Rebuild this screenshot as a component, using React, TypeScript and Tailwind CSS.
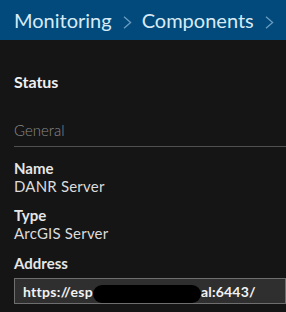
import React from 'react';

const font = { fontFamily: '"Lato", "Noto Sans", sans-serif' };

function Chevron() {
  return (
    <svg width="9" height="13" viewBox="0 0 9 13" className="ml-[11px] mr-[10px] mt-[4px] shrink-0">
      <path d="M1 0.8 L7.6 6.5 L1 12.2" fill="none" stroke="#6a9cc2" strokeWidth="1.3" />
    </svg>
  );
}

function Field({ label, value }: { label: string; value: string }) {
  return (
    <div className="flex flex-col">
      <div className="text-[15px] font-bold leading-[18px] text-[#e6e6e6]">{label}</div>
      <div className="text-[15px] tracking-[0.2px] leading-[19px] text-[#dcdcdc]">{value}</div>
    </div>
  );
}

export default function App() {
  return (
    <div className="h-[312px] w-[286px] overflow-hidden bg-[#151515]" style={font}>
      <div className="flex h-[40px] items-center whitespace-nowrap bg-[#014a7b] pl-[14px] text-[20px] text-[#d7eaf6]">
        <span>Monitoring</span>
        <Chevron />
        <span>Components</span>
        <Chevron />
      </div>

      <div className="pl-[14px]">
        <div className="pt-[32px] text-[16px] font-bold leading-[20px] text-[#f0f0f0]">Status</div>

        <div className="mt-[28px] border-b border-[#505050] pb-[6px] text-[15px] font-light leading-[20px] text-[#8a8a8a]">
          General
        </div>

        <div className="mt-[12px] flex flex-col gap-[10px]">
          <Field label="Name" value="DANR Server" />
          <Field label="Type" value="ArcGIS Server" />
          <div className="mt-[1px] flex flex-col">
            <div className="text-[15px] font-bold leading-[18px] text-[#e6e6e6]">Address</div>
            <div className="mt-[6px] flex h-[26px] items-center whitespace-nowrap border border-[#6e6e6e] bg-[#2f2f2f] pl-[8px] text-[14px] font-bold text-[#f2f2f2]">
              <span className="tracking-[0.3px]">https://esp</span>
              <span className="mt-[5px] inline-block h-[18px] w-[108px] shrink-0 rounded-full bg-black" />
              <span className="tracking-[0.2px]">al:6443/</span>
            </div>
          </div>
        </div>
      </div>
    </div>
  );
}
